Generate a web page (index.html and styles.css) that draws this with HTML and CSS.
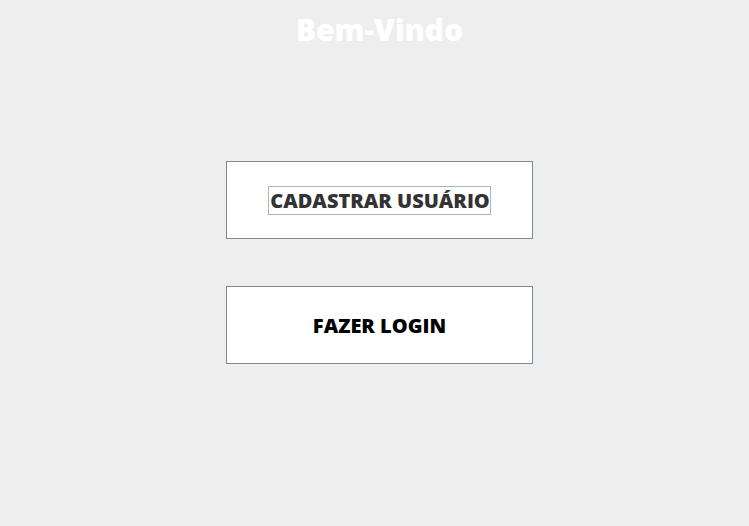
FILE: index.html
```html
<!DOCTYPE html>
<html lang="pt">
<head>
<meta charset="utf-8">
<title>Bem-Vindo</title>
<link rel="stylesheet" href="styles.css">
</head>
<body>
<main class="panel">
  <h1 class="title">Bem-Vindo</h1>
  <div class="actions">
    <button class="btn btn-focused" type="button"><span class="focus-ring">CADASTRAR USUÁRIO</span></button>
    <button class="btn" type="button"><span class="label">FAZER LOGIN</span></button>
  </div>
</main>
</body>
</html>
```
FILE: styles.css
```css
html, body {
  margin: 0;
  padding: 0;
  background: #eeeeee;
}
body {
  width: 749px;
  height: 526px;
  overflow: hidden;
  font-family: "Open Sans", "Noto Sans", sans-serif;
}
.panel {
  width: 307px;
  margin-left: 226px;
  display: flex;
  flex-direction: column;
  align-items: center;
}
.title {
  margin: 10px 0 0 0;
  font-size: 30px;
  line-height: 40px;
  font-weight: 800;
  color: #ffffff;
  letter-spacing: 0;
}
.actions {
  margin-top: 111px;
  display: flex;
  flex-direction: column;
  gap: 47px;
  width: 100%;
}
.btn {
  box-sizing: border-box;
  width: 307px;
  height: 78px;
  background: #ffffff;
  border: 1px solid #7a8a99;
  border-radius: 0;
  padding: 0;
  margin: 0;
  display: flex;
  align-items: center;
  justify-content: center;
  font-family: "Open Sans", "Noto Sans", sans-serif;
  font-size: 20px;
  font-weight: 800;
  letter-spacing: 0;
  color: #000000;
}
.btn-focused {
  color: #333333;
}
.focus-ring {
  display: inline-block;
  border: 1px solid #a3b8cc;
  padding: 0 0 0 1px;
  line-height: 27px;
}
.label {
  line-height: 27px;
}
```
